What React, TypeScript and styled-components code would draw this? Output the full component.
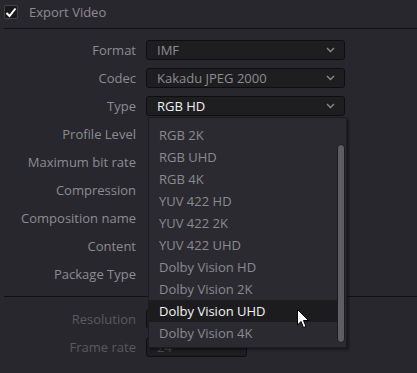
import React from 'react';
import styled, { createGlobalStyle } from 'styled-components';

const GlobalStyle = createGlobalStyle`
  html, body {
    margin: 0;
    background: #28272d;
  }
  body {
    font-family: 'Open Sans', 'Noto Sans', sans-serif;
    font-size: 13px;
  }
`;

const Panel = styled.div`
  width: 417px;
  height: 373px;
  overflow: hidden;
  position: relative;
  background: #28272d;
`;

const Header = styled.div`
  display: flex;
  align-items: center;
  gap: 11px;
  height: 29px;
  margin-left: 4px;
  border-bottom: 1px solid #111113;
  box-sizing: border-box;
  padding-bottom: 4px;
`;

const CheckBox = styled.div`
  width: 14px;
  height: 14px;
  box-sizing: border-box;
  border: 1px solid #434347;
  border-radius: 2px;
  background: #19191b;
  display: flex;
  align-items: center;
  justify-content: center;
`;

const HeaderLabel = styled.span`
  color: #8c8d91;
`;

const Form = styled.div<{ $top: number }>`
  display: grid;
  grid-template-columns: 132px 199px;
  grid-auto-rows: 28px;
  column-gap: 10px;
  padding: ${(p) => p.$top}px 0 0 4px;
`;

const Label = styled.div<{ $disabled?: boolean }>`
  display: flex;
  align-items: center;
  justify-content: flex-end;
  color: ${(p) => (p.$disabled ? '#5a5a5f' : '#8c8d91')};
  white-space: nowrap;
`;

const Field = styled.div`
  position: relative;
  display: flex;
  align-items: center;
`;

const SelectBox = styled.div<{ $open?: boolean; $width?: number; $disabled?: boolean }>`
  width: ${(p) => (p.$width ? `${p.$width}px` : '100%')};
  height: 20px;
  box-sizing: border-box;
  border: 1px solid #0e0e10;
  border-radius: 3px;
  background: #1e1e21;
  display: flex;
  align-items: center;
  justify-content: space-between;
  padding: 0 9px 0 10px;
  color: ${(p) => (p.$open ? '#f2f2f2' : p.$disabled ? '#4a4a4f' : '#8c8d91')};
`;

const Divider = styled.div`
  margin: 8px 0 0 4px;
  border-bottom: 1px solid #111113;
`;

const Popup = styled.div`
  position: absolute;
  top: 25px;
  left: 2px;
  width: 199px;
  height: 231px;
  box-sizing: border-box;
  background: #2b2a30;
  border: 1px solid #1d1d21;
  box-shadow: 2px 2px 2px rgba(0, 0, 0, 0.4);
  padding: 6px 0 0 0;
  z-index: 5;
`;

const Item = styled.div<{ $active?: boolean }>`
  height: 22px;
  width: 188px;
  display: flex;
  align-items: center;
  padding-left: 10px;
  box-sizing: border-box;
  color: ${(p) => (p.$active ? '#f4f4f4' : '#8a8b8f')};
  background: ${(p) => (p.$active ? '#1c1c1f' : 'transparent')};
`;

const ScrollThumb = styled.div`
  position: absolute;
  right: 1px;
  top: 26px;
  width: 8px;
  height: 199px;
  box-sizing: border-box;
  background: #5c5e63;
  border: 1px solid #1c1c20;
  border-radius: 4px;
`;

const Cursor = styled.svg`
  position: absolute;
  left: 297px;
  top: 309px;
  z-index: 10;
`;

const Chevron = () => (
  <svg width="9" height="6" viewBox="0 0 9 6">
    <path d="M1 1 L4.5 4.5 L8 1" fill="none" stroke="#8a8a8e" strokeWidth="1.4" />
  </svg>
);

const typeOptions = [
  'RGB 2K',
  'RGB UHD',
  'RGB 4K',
  'YUV 422 HD',
  'YUV 422 2K',
  'YUV 422 UHD',
  'Dolby Vision HD',
  'Dolby Vision 2K',
  'Dolby Vision UHD',
  'Dolby Vision 4K',
];

const plainLabels = [
  'Profile Level',
  'Maximum bit rate',
  'Compression',
  'Composition name',
  'Content',
  'Package Type',
];

const App = () => {
  return (
    <Panel>
      <GlobalStyle />
      <Header>
        <CheckBox>
          <svg width="12" height="11" viewBox="0 0 12 11">
            <path d="M1.5 6 L4.5 9 L10.5 1.5" fill="none" stroke="#ffffff" strokeWidth="2" />
          </svg>
        </CheckBox>
        <HeaderLabel>Export Video</HeaderLabel>
      </Header>
      <Form $top={7}>
        <Label>Format</Label>
        <Field>
          <SelectBox>
            IMF
            <Chevron />
          </SelectBox>
        </Field>
        <Label>Codec</Label>
        <Field>
          <SelectBox>
            Kakadu JPEG 2000
            <Chevron />
          </SelectBox>
        </Field>
        <Label>Type</Label>
        <Field>
          <SelectBox $open>
            RGB HD
            <Chevron />
          </SelectBox>
          <Popup>
            {typeOptions.map((opt) => (
              <Item key={opt} $active={opt === 'Dolby Vision UHD'}>
                {opt}
              </Item>
            ))}
            <ScrollThumb />
          </Popup>
        </Field>
        {plainLabels.map((label) => (
          <React.Fragment key={label}>
            <Label>{label}</Label>
            <Field />
          </React.Fragment>
        ))}
      </Form>
      <Divider />
      <Form $top={8}>
        <Label $disabled>Resolution</Label>
        <Field>
          <SelectBox $disabled />
        </Field>
        <Label $disabled>Frame rate</Label>
        <Field>
          <SelectBox $disabled $width={101}>
            24
          </SelectBox>
        </Field>
      </Form>
      <Cursor width="13" height="20" viewBox="0 0 13 20">
        <path
          d="M0.5 0.5 L0.5 16 L4 12.5 L6.5 18.5 L9 17.5 L6.5 11.5 L11.5 11.5 Z"
          fill="#ffffff"
          stroke="#000000"
          strokeWidth="1"
        />
      </Cursor>
    </Panel>
  );
};

export default App;
